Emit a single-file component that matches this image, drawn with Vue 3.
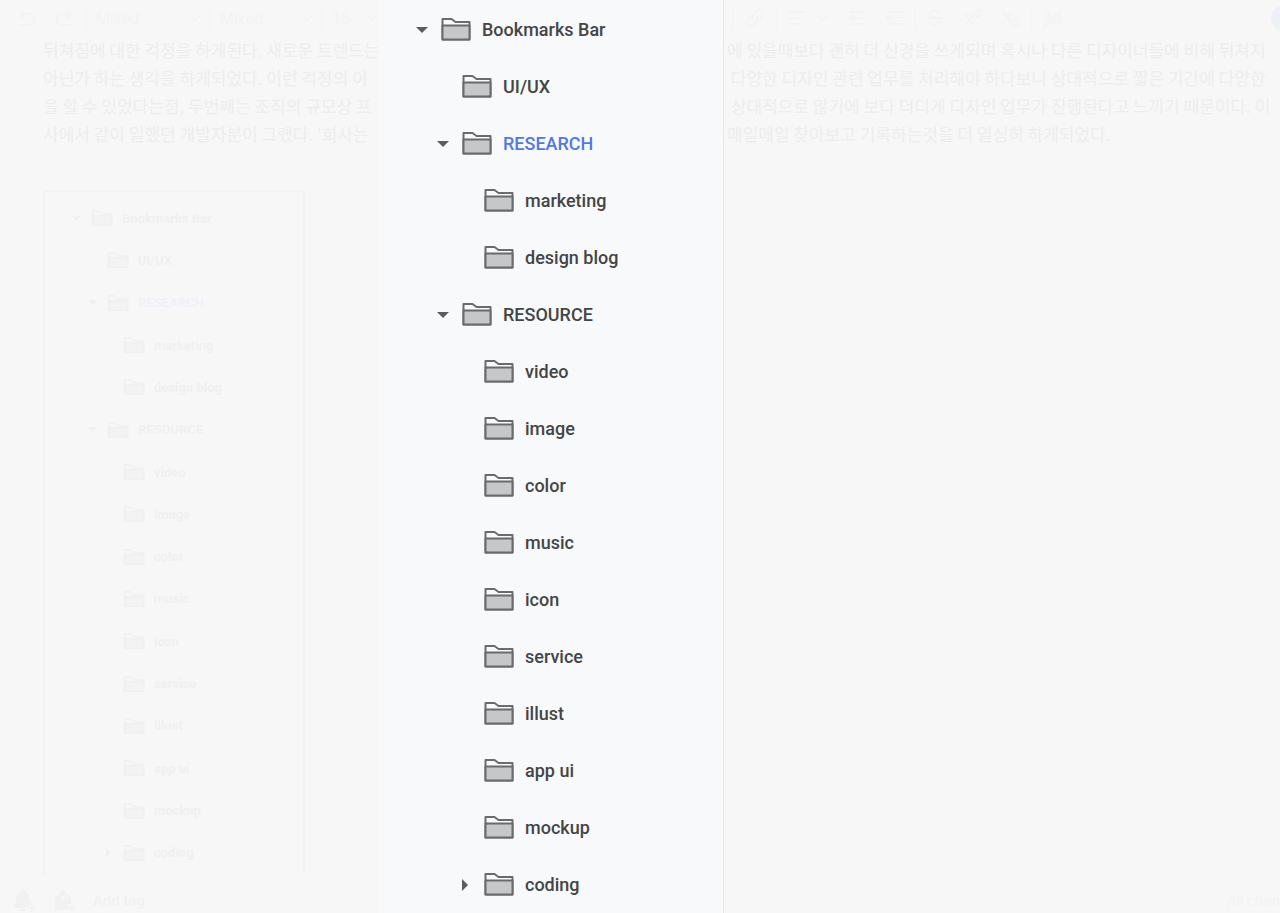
<script setup>
const nodes = [
  { name: 'Bookmarks Bar', level: 0, state: 'open' },
  { name: 'UI/UX', level: 1 },
  { name: 'RESEARCH', level: 1, state: 'open', active: true },
  { name: 'marketing', level: 2 },
  { name: 'design blog', level: 2 },
  { name: 'RESOURCE', level: 1, state: 'open' },
  { name: 'video', level: 2 },
  { name: 'image', level: 2 },
  { name: 'color', level: 2 },
  { name: 'music', level: 2 },
  { name: 'icon', level: 2 },
  { name: 'service', level: 2 },
  { name: 'illust', level: 2 },
  { name: 'app ui', level: 2 },
  { name: 'mockup', level: 2 },
  { name: 'coding', level: 2, state: 'closed' },
]
const startLines = [
  '뒤쳐짐에 대한 걱정을 하게된다. 새로운 트렌드는',
  '아닌가 하는 생각을 하게되었다. 이런 걱정의 이',
  '을 할 수 있었다는점, 두번째는 조직의 규모상 프',
  "사에서 같이 일했던 개발자분이 그랬다. '회사는",
]
const endLines = [
  '에 있을때보다 괜히 더 신경을 쓰게되며 혹시나 다른 디자이너들에 비해 뒤쳐지',
  ' 다양한 디자인 관련 업무를 처리해야 하다보니 상대적으로 짧은 기간에 다양한',
  ' 상대적으로 많기에 보다 더디게 디자인 업무가 진행된다고 느끼기 때문이다. 이',
  '매일매일 찾아보고 기록하는것을 더 열심히 하게되었다.',
]
</script>

<template>
  <main class="page">
    <section class="side start">
      <div class="toolbar">
        <button class="tool undo" aria-label="Undo">
          <svg width="20" height="20" viewBox="0 0 20 20"><path d="M7 2 3 6l4 4M3 6h9a5 5 0 0 1 0 11H1" /></svg>
        </button>
        <button class="tool redo" aria-label="Redo">
          <svg width="20" height="20" viewBox="0 0 20 20"><path d="m13 2 4 4-4 4M17 6H8a5 5 0 0 0 0 11h11" /></svg>
        </button>
        <i class="rule"></i>
        <label class="pick style">
          <select aria-label="Style"><option>Mixed</option></select>
          <svg width="10" height="6" viewBox="0 0 10 6"><path d="m1 1 4 4 4-4" /></svg>
        </label>
        <i class="rule"></i>
        <label class="pick font">
          <select aria-label="Font"><option>Mixed</option></select>
          <svg width="10" height="6" viewBox="0 0 10 6"><path d="m1 1 4 4 4-4" /></svg>
        </label>
        <i class="rule"></i>
        <label class="pick size">
          <select aria-label="Size"><option>16</option></select>
          <svg width="10" height="6" viewBox="0 0 10 6"><path d="m1 1 4 4 4-4" /></svg>
        </label>
      </div>
      <div class="note">
        <p v-for="line in startLines" :key="line">{{ line }}</p>
      </div>
      <ul class="tree small">
        <li v-for="node in nodes" :key="node.name">
          <button :class="['row', 'l' + node.level, { active: node.active }]">
            <span class="caret"><svg v-if="node.state" :class="node.state" viewBox="0 0 12 12"><path d="M0 3h12L6 9z" /></svg></span>
            <svg class="folder" viewBox="0 0 30 24">
              <path class="shell" d="M2 22V2.5h8.5l4.5 4h13V22z" />
              <path class="front" d="M2 9h26v13H2z" />
            </svg>
            <span>{{ node.name }}</span>
          </button>
        </li>
      </ul>
      <footer class="foot">
        <button class="tool mark" aria-label="Add reminder">
          <svg width="24" height="26" viewBox="0 0 24 26">
            <path class="solid" d="M10 1c1 0 2 1 2 2 3 1 4 4 4 7v3l2 2v2h-2v3H1v-2l2-4v-4c0-3 2-6 5-7 0-1 1-2 2-2zM7 21h5v2H7z" />
            <path d="M19 16v8M15 20h8" />
          </svg>
        </button>
        <button class="tool mark" aria-label="Tag">
          <svg width="24" height="26" viewBox="0 0 24 26">
            <path class="solid" fill-rule="evenodd" d="M10 1 18 10v6h-3v6H2V10zM10 8a2 2 0 1 0 0 4 2 2 0 0 0 0-4z" />
            <path d="M19 16v8M15 20h8" />
          </svg>
        </button>
        <input aria-label="Add tag" placeholder="Add tag" />
      </footer>
    </section>

    <nav class="panel" aria-label="Bookmarks">
      <ul class="tree large">
        <li v-for="node in nodes" :key="node.name">
          <button :class="['row', 'l' + node.level, { active: node.active }]">
            <span class="caret"><svg v-if="node.state" :class="node.state" viewBox="0 0 12 12"><path d="M0 3h12L6 9z" /></svg></span>
            <svg class="folder" viewBox="0 1 30 24">
              <path class="shell" d="M1.5 22.5V2h9l4 3h14v17.500z" />
              <path class="front" d="M1.500 8.500h27v14h-27z" />
            </svg>
            <span>{{ node.name }}</span>
          </button>
        </li>
      </ul>
    </nav>

    <section class="side end">
      <div class="toolbar">
        <i class="rule"></i>
        <button class="tool link" aria-label="Link">
          <svg width="20" height="20" viewBox="0 0 20 20"><path d="m8 12c-2-2-1-4 0-5l3-4c3-3 8 1 6 5l-3 4M11 8c2 2 2 4 1 5l-3 3c-4 4-9-1-6-5l2-3" /></svg>
        </button>
        <i class="rule"></i>
        <button class="tool align" aria-label="Align">
          <svg width="16" height="14" viewBox="0 0 16 14"><path d="M0 1h16M0 7h11M0 13h14" /></svg>
          <svg width="10" height="6" viewBox="0 0 10 6"><path d="m1 1 4 4 4-4" /></svg>
        </button>
        <button class="tool wide" aria-label="Indent">
          <svg width="18" height="14" viewBox="0 0 18 14"><path d="M2 1h15M9 7h8M2 13h15M0 7h7M4 4l3 3-3 3" /></svg>
        </button>
        <button class="tool wide" aria-label="Outdent">
          <svg width="18" height="14" viewBox="0 0 18 14"><path d="M2 1h15M10 7h7M2 13h15M1 7h7M4 4 1 7l3 3" /></svg>
        </button>
        <i class="rule"></i>
        <button class="tool wide" aria-label="Strikethrough">
          <svg width="18" height="16" viewBox="0 0 18 16"><path d="M1 8h16M13 4c-1-4-9-4-9 0 0 3 9 3 9 7 0 5-9 5-10 0" /></svg>
        </button>
        <button class="tool wide" aria-label="Superscript">
          <svg width="18" height="18" viewBox="0 0 18 18"><path d="m1 5 9 11M10 5 1 16M12 3c0-3 5-3 5 0 0 1-4 3-5 5h5" /></svg>
        </button>
        <button class="tool wide" aria-label="Subscript">
          <svg width="18" height="18" viewBox="0 0 18 18"><path d="m1 3 9 11M10 3 1 14M12 12c0-3 5-3 5 0 0 1-4 3-5 5h5" /></svg>
        </button>
        <i class="rule"></i>
        <button class="tool clear" aria-label="Clear formatting">
          <span>Aa</span>
          <svg width="22" height="20" viewBox="0 0 22 20"><path d="M1 19 19 1" /></svg>
        </button>
        <button class="share" aria-label="Share"></button>
      </div>
      <div class="note">
        <p v-for="line in endLines" :key="line">{{ line }}</p>
      </div>
      <footer class="foot">
        <span class="status">All chan</span>
      </footer>
    </section>
  </main>
</template>

<style>
body {
  background: #f7f7f7;
}
</style>

<style scoped>
.page {
  display: grid;
  grid-template-columns: 379px 345px minmax(0, 1fr);
  min-height: 100vh;
  overflow: hidden;
  background: #f7f7f7;
  font-family: Roboto, "Noto Sans CJK KR", sans-serif;
}
button,
select,
input {
  border: 0;
  padding: 0;
  margin: 0;
  background: none;
  font: inherit;
  color: inherit;
  appearance: none;
  outline: 0;
}
.side {
  display: flex;
  flex-direction: column;
  min-width: 0;
  overflow: hidden;
}
.toolbar {
  display: flex;
  align-items: center;
  height: 36px;
  flex: none;
  color: #f3f3f3;
  font-size: 16px;
}
.start .toolbar {
  padding-left: 17px;
}
.end .toolbar {
  padding-left: 8px;
}
.toolbar svg path,
.foot svg path {
  fill: none;
  stroke: currentColor;
  stroke-width: 2;
}
.toolbar svg {
  flex: none;
}
.rule {
  width: 2px;
  height: 24px;
  flex: none;
  background: #f5f5f5;
}
.tool {
  display: flex;
  align-items: center;
  justify-content: center;
  flex: none;
}
.undo {
  width: 20px;
}
.redo {
  width: 20px;
  margin: 0 11px 0 17px;
}
.pick {
  display: flex;
  align-items: center;
  flex: none;
}
.pick select {
  flex: 1;
  min-width: 0;
  padding-left: 9px;
}
.style {
  width: 122px;
  padding-right: 9px;
  box-sizing: border-box;
}
.font {
  width: 110px;
  padding-right: 9px;
  box-sizing: border-box;
}
.size {
  width: 54px;
}
.link {
  width: 42px;
}
.align {
  width: 60px;
  gap: 12px;
}
.wide {
  width: 38px;
}
.clear {
  position: relative;
  width: 42px;
}
.clear svg {
  position: absolute;
  left: 10px;
  top: 0;
}
.share {
  width: 26px;
  height: 26px;
  flex: none;
  margin-left: auto;
  margin-right: -17px;
  border-radius: 50%;
  background: #edf0f6;
}
.note {
  height: 154px;
  flex: none;
  box-sizing: border-box;
  overflow: hidden;
  color: #ededed;
  font-family: "Noto Sans CJK KR", sans-serif;
  font-size: 17px;
  line-height: 28px;
}
.start .note {
  padding-left: 43px;
}
.end .note {
  padding-left: 3px;
}
.note p {
  margin: 0;
  white-space: pre;
}
.tree {
  list-style: none;
  margin: 0;
  padding: 0;
}
.row {
  display: flex;
  align-items: center;
  width: 100%;
  text-align: left;
  white-space: nowrap;
}
.caret,
.caret svg {
  display: block;
  flex: none;
}
.closed {
  transform: rotate(-90deg);
}
.folder {
  flex: none;
}
.shell,
.front {
  stroke-width: 2;
  stroke-linejoin: round;
}
.panel {
  background: #f8f9fb;
  border-right: 1px solid #e6e7e9;
}
.large {
  padding-top: 1px;
  color: #444546;
  font-size: 18px;
  font-weight: 500;
}
.large .row {
  height: 57px;
}
.large .l0 {
  padding-left: 37px;
}
.large .l1 {
  padding-left: 58px;
}
.large .l2 {
  padding-left: 80px;
}
.large .caret,
.large .caret svg {
  width: 12px;
  height: 12px;
}
.large .caret {
  margin-right: 13px;
}
.large .caret path {
  fill: #5c5d5f;
}
.large .folder {
  width: 30px;
  height: 24px;
  margin-right: 11px;
}
.large .shell {
  fill: #f8f9fb;
  stroke: #6a6b6c;
}
.large .front {
  fill: #c6c7c8;
  stroke: #6a6b6c;
}
.large .active {
  color: #5079e4;
}
.small {
  display: grid;
  grid-auto-rows: 1fr;
  flex: 1;
  box-sizing: border-box;
  width: 262px;
  margin-left: 43px;
  padding-top: 5px;
  border: 2px solid #eff3f6;
  border-bottom: 0;
  color: #f0f0f0;
  font-size: 13px;
  font-weight: 700;
}
.small .row {
  height: 100%;
}
.small .l0 {
  padding-left: 27px;
}
.small .l1 {
  padding-left: 43px;
}
.small .l2 {
  padding-left: 59px;
}
.small .caret,
.small .caret svg {
  width: 9px;
  height: 9px;
}
.small .caret {
  margin-right: 10px;
}
.small .caret path {
  fill: #efefef;
}
.small .folder {
  width: 22px;
  height: 18px;
  margin-right: 9px;
}
.small .shell {
  fill: #f7f7f7;
  stroke: #f0f0f0;
}
.small .front {
  fill: #f3f3f3;
  stroke: #f0f0f0;
}
.small .active {
  color: #eff1f8;
}
.foot {
  display: flex;
  align-items: center;
  height: 39px;
  flex: none;
  box-sizing: border-box;
  padding-top: 14px;
  color: #f2f2f2;
  font-size: 15px;
}
.start .foot {
  padding-left: 13px;
}
.end .foot {
  margin-top: auto;
}
.foot svg .solid {
  fill: #f1f1f1;
  stroke: none;
}
.mark {
  width: 24px;
  margin-right: 16px;
}
.foot input {
  width: 120px;
}
.foot input::placeholder {
  color: #f0f0f0;
  opacity: 1;
}
.status {
  flex: none;
  margin-left: auto;
  color: #f3f3f3;
}
</style>
